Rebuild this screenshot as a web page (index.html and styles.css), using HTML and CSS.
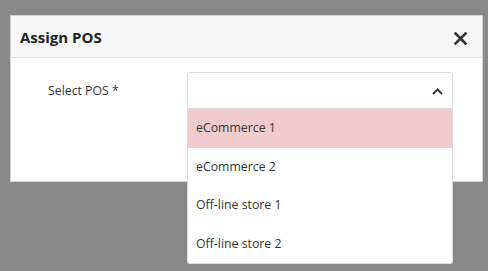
FILE: index.html
```html
<!DOCTYPE html>
<html lang="en">
<head>
    <meta charset="UTF-8">
    <title>Assign POS</title>
    <link rel="stylesheet" href="styles.css">
</head>
<body>
    <div class="modal">
        <div class="modal-header">
            <h2>Assign POS</h2>
            <button class="close" aria-label="Close">
                <svg width="13" height="13" viewBox="0 0 13 13"><path d="M1.5 1.5 L11.5 11.5 M11.5 1.5 L1.5 11.5" stroke="#333" stroke-width="2.6" stroke-linecap="square"/></svg>
            </button>
        </div>
        <div class="modal-body">
            <div class="form-row">
                <label>Select POS *</label>
                <div class="select open">
                    <div class="select-box">
                        <svg class="chevron" width="11" height="7" viewBox="0 0 11 7"><path d="M1 6 L5.5 1.5 L10 6" fill="none" stroke="#333" stroke-width="1.8"/></svg>
                    </div>
                    <ul class="options">
                        <li class="active">eCommerce 1</li>
                        <li>eCommerce 2</li>
                        <li>Off-line store 1</li>
                        <li>Off-line store 2</li>
                    </ul>
                </div>
            </div>
        </div>
    </div>
</body>
</html>
```

FILE: styles.css
```css
body {
    margin: 0;
    padding: 15px 0 0 10px;
    background: #898989;
    font-family: "Open Sans", "Noto Sans", sans-serif;
    color: #333;
    height: 271px;
    box-sizing: border-box;
    overflow: hidden;
}
.modal {
    width: 473px;
    height: 167px;
    box-sizing: border-box;
    background: #fff;
    border: 1px solid #d4d4d4;
}
.modal-header {
    height: 42px;
    box-sizing: border-box;
    background: #f7f7f7;
    border-bottom: 1px solid #e2e2e2;
    display: flex;
    align-items: center;
    justify-content: space-between;
    padding: 0 15px 0 9px;
}
.modal-header h2 {
    margin: 0;
    font-size: 15px;
    font-weight: 700;
    color: #222;
}
.close {
    border: none;
    background: none;
    padding: 0;
    margin-top: 4px;
    display: flex;
}
.modal-body {
    padding: 14px 0 0 37px;
}
.form-row {
    display: flex;
    align-items: flex-start;
}
.form-row label {
    width: 139px;
    font-size: 12.3px;
    line-height: 18px;
    padding-top: 10px;
}
.select {
    position: relative;
    width: 266px;
}
.select-box {
    height: 37px;
    box-sizing: border-box;
    border: 1px solid #dcdcdc;
    border-radius: 3px 3px 0 0;
    display: flex;
    align-items: center;
    justify-content: flex-end;
    padding-right: 9px;
}
.chevron {
    margin-top: 2px;
}
.options {
    position: absolute;
    top: 37px;
    left: 0;
    right: 0;
    margin: 0;
    padding: 0;
    list-style: none;
    background: #fff;
    border: 1px solid #dcdcdc;
    border-top: none;
    border-radius: 0 0 3px 3px;
}
.options li {
    height: 38.5px;
    line-height: 38.5px;
    padding-left: 8px;
    font-size: 12.3px;
    color: #333;
}
.options li.active {
    background: #f0cbcd;
}
```
